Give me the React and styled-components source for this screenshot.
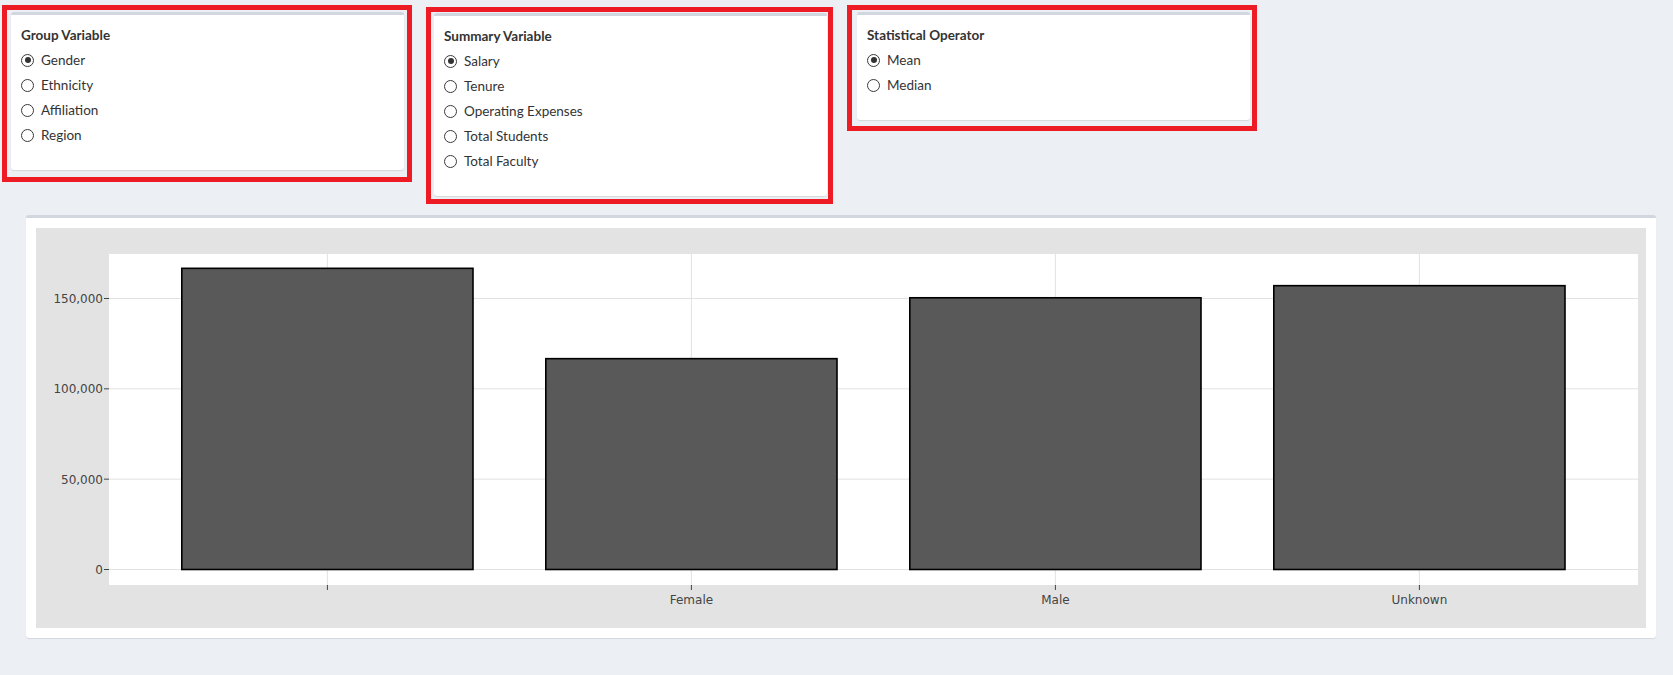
import React from 'react';
import styled, { createGlobalStyle } from 'styled-components';

const GlobalStyle = createGlobalStyle`
  body {
    margin: 0;
    background: #ecf0f5;
    font-family: Lato, "Liberation Sans", sans-serif;
    color: #333;
  }
`;

const Page = styled.div`
  width: 1673px;
  height: 675px;
  overflow: hidden;
`;

const ControlsRow = styled.div`
  display: flex;
  align-items: flex-start;
  gap: 14px;
  padding: 5px 0 0 2px;
`;

// red highlight drawn around each control box
const Frame = styled.div`
  border: 5px solid #ed1c24;
  padding: ${({ $pad }) => $pad};
  margin-top: ${({ $shift }) => $shift || '0px'};
`;

const Card = styled.div`
  width: 393px;
  box-sizing: border-box;
  background: #fff;
  border-top: 3px solid #d2d6de;
  border-radius: 3px;
  box-shadow: 0 1px 1px rgba(0, 0, 0, 0.1);
  padding: 10px 10px 25px;
`;

const GroupTitle = styled.div`
  font-weight: 700;
  font-size: 13.5px;
  line-height: 20px;
  margin-bottom: 5px;
`;

const OptionList = styled.div`
  display: flex;
  flex-direction: column;
  gap: 5px;
`;

const Option = styled.label`
  display: flex;
  align-items: center;
  gap: 7px;
  height: 20px;
  font-size: 13.5px;
`;

const RadioCircle = styled.span`
  width: 13px;
  height: 13px;
  box-sizing: border-box;
  border: 1.3px solid #3a3a3a;
  border-radius: 50%;
  display: flex;
  align-items: center;
  justify-content: center;

  &::after {
    content: '';
    width: 6px;
    height: 6px;
    border-radius: 50%;
    background: ${({ $checked }) => ($checked ? '#333' : 'transparent')};
  }
`;

const ChartBox = styled.div`
  margin: 11px 17px 0 26px;
  background: #fff;
  border-top: 3px solid #d2d6de;
  border-radius: 3px;
  box-shadow: 0 1px 1px rgba(0, 0, 0, 0.1);
  padding: 10px;
`;

const groups = [
  { title: 'Group Variable', options: ['Gender', 'Ethnicity', 'Affiliation', 'Region'], pad: '2px 3px 7px 4px' },
  {
    title: 'Summary Variable',
    options: ['Salary', 'Tenure', 'Operating Expenses', 'Total Students', 'Total Faculty'],
    pad: '1px 1px 3px 3px',
    shift: '2px',
  },
  { title: 'Statistical Operator', options: ['Mean', 'Median'], pad: '2px 2px 6px 5px' },
];

const bars = [
  { label: '', value: 166700 },
  { label: 'Female', value: 116700 },
  { label: 'Male', value: 150400 },
  { label: 'Unknown', value: 157100 },
];

const W = 1610;
const H = 400;
const PX = 73;
const PY = 26;
const PW = 1529;
const PH = 331;
const ZERO = 341.5;
const PER = 271 / 150000;
const STEP = 364;

const yOf = (v) => ZERO - v * PER;
const xOf = (i) => PX + (i + 0.6) * STEP;

const BarChart = () => (
  <svg width={W} height={H} style={{ display: 'block' }}>
    <rect x="0" y="0" width={W} height={H} fill="#e3e3e3" />
    <rect x={PX} y={PY} width={PW} height={PH} fill="#fff" />
    {[0, 50000, 100000, 150000].map((v) => (
      <line key={v} x1={PX} x2={PX + PW} y1={yOf(v)} y2={yOf(v)} stroke="#e2e2e2" strokeWidth="1" />
    ))}
    {bars.map((b, i) => (
      <line key={i} x1={xOf(i)} x2={xOf(i)} y1={PY} y2={PY + PH} stroke="#e2e2e2" strokeWidth="1" />
    ))}
    {bars.map((b, i) => (
      <rect
        key={i}
        x={xOf(i) - 145.6}
        y={yOf(b.value)}
        width={291.2}
        height={ZERO - yOf(b.value)}
        fill="#595959"
        stroke="#000"
        strokeWidth="1.6"
      />
    ))}
    {[0, 50000, 100000, 150000].map((v) => (
      <g key={v}>
        <line x1={PX - 5} x2={PX} y1={yOf(v)} y2={yOf(v)} stroke="#444" strokeWidth="1" />
        <text
          x={PX - 6}
          y={yOf(v) + 4.5}
          textAnchor="end"
          fontFamily="'DejaVu Sans', Verdana, sans-serif"
          fontSize="12"
          fill="#444"
        >
          {v.toLocaleString('en-US')}
        </text>
      </g>
    ))}
    {bars.map((b, i) => (
      <g key={i}>
        <line x1={xOf(i)} x2={xOf(i)} y1={PY + PH} y2={PY + PH + 5} stroke="#444" strokeWidth="1" />
        <text
          x={xOf(i)}
          y={PY + PH + 18.5}
          textAnchor="middle"
          fontFamily="'DejaVu Sans', Verdana, sans-serif"
          fontSize="12"
          fill="#444"
        >
          {b.label}
        </text>
      </g>
    ))}
  </svg>
);

const App = () => (
  <Page>
    <GlobalStyle />
    <ControlsRow>
      {groups.map((g) => (
        <Frame key={g.title} $pad={g.pad} $shift={g.shift}>
          <Card>
            <GroupTitle>{g.title}</GroupTitle>
            <OptionList>
              {g.options.map((o, i) => (
                <Option key={o}>
                  <RadioCircle $checked={i === 0} />
                  {o}
                </Option>
              ))}
            </OptionList>
          </Card>
        </Frame>
      ))}
    </ControlsRow>
    <ChartBox>
      <BarChart />
    </ChartBox>
  </Page>
);

export default App;
